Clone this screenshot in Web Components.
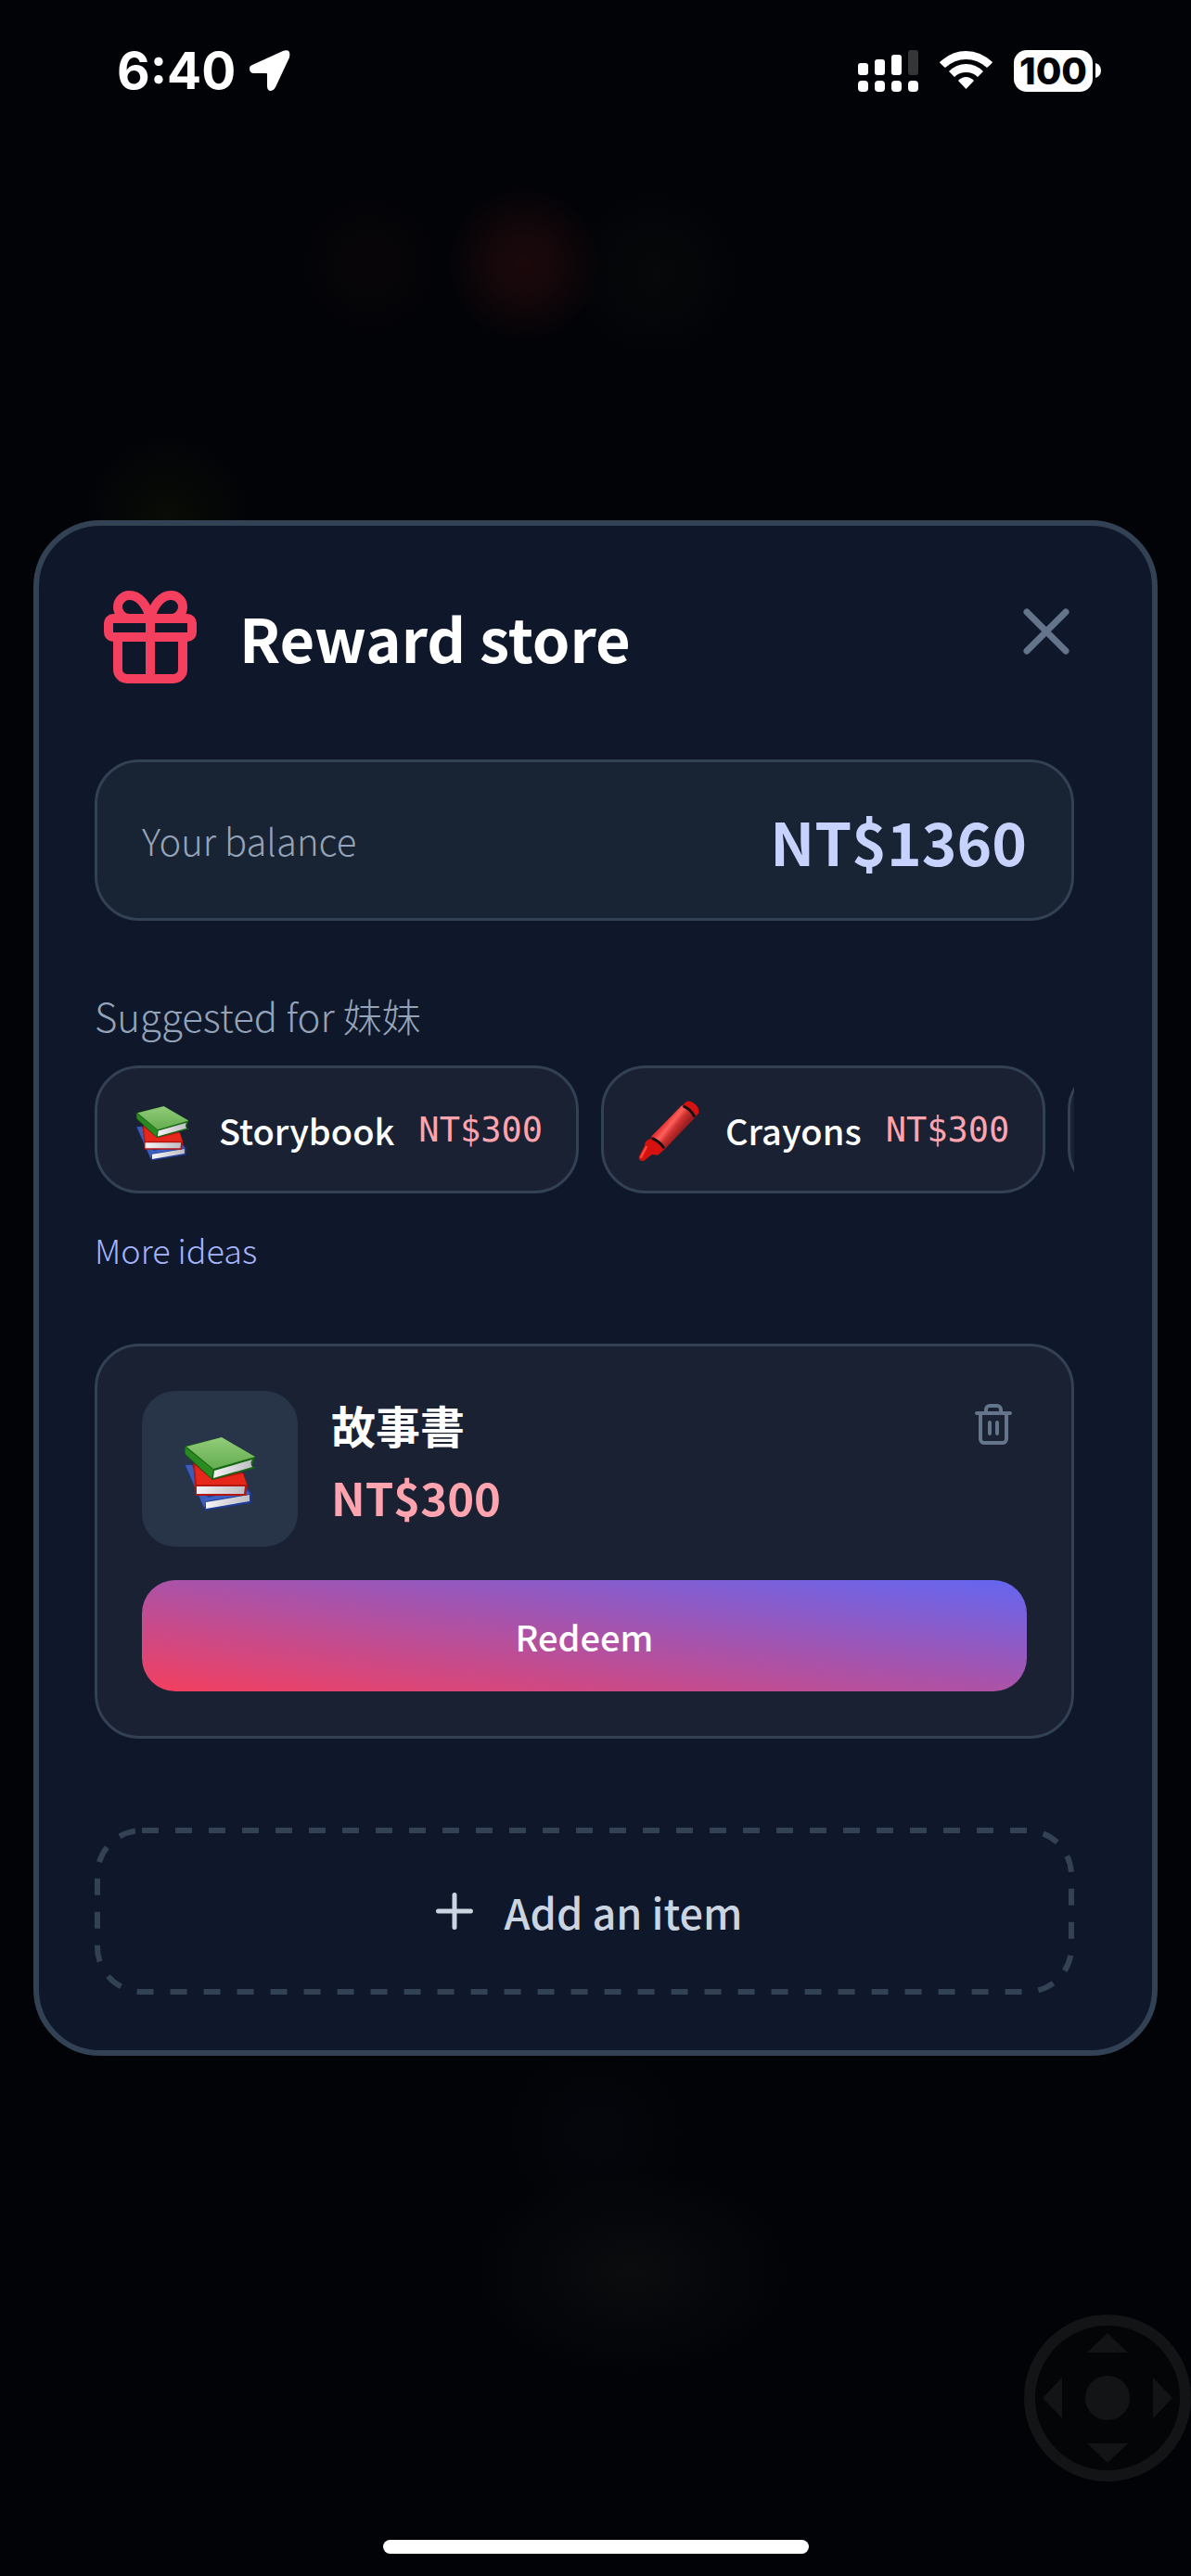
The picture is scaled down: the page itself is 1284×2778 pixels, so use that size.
<!DOCTYPE html>
<html lang="en">
<head>
<meta charset="utf-8">
<meta name="viewport" content="width=device-width, initial-scale=1">
<title>Reward store</title>
<style>
body {
    margin: 0;
    background-color: #020307;
    color: #fff;
    font-family: "Noto Sans CJK TC", "Noto Sans", sans-serif;
}
</style>
</head>
<body>
<app-screen>
    <status-bar slot="top" time="6:40" battery="100"></status-bar>
    <store-dialog heading="Reward store">
        <balance-box label="Your balance">NT$1360</balance-box>
        <idea-list label="Suggested for 妹妹">
            <idea-chip icon="books" name="Storybook" price="NT$300"></idea-chip>
            <idea-chip icon="crayon" name="Crayons" price="NT$300"></idea-chip>
            <idea-chip></idea-chip>
        </idea-list>
        <reward-item icon="books" name="故事書" price="NT$300">Redeem</reward-item>
        <add-button slot="footer">Add an item</add-button>
    </store-dialog>
    <joy-pad slot="float"></joy-pad>
</app-screen>

<script>
// small pictures shared by the chips and the items
const pictures = {
    books: `<svg viewBox="-8 -12 93 93" aria-hidden="true">
        <defs>
            <linearGradient id="green" x1="0" y1="0" x2="0" y2="1"><stop offset="0" stop-color="#92cc7a"/><stop offset="1" stop-color="#64ad4f"/></linearGradient>
            <linearGradient id="page" x1="0" y1="0" x2="1" y2="0"><stop offset="0" stop-color="#f4f4f6"/><stop offset="1" stop-color="#bdbdc3"/></linearGradient>
        </defs>
        <path d="M0 30L8 29L26 60L67 53L72 61L72 71L22 79Z" fill="#1e3a93"/>
        <path d="M1 30L8 30L25 65L21 76Z" fill="#3c5cb8"/>
        <path d="M20 66L66 56L71 61L23 69Z" fill="#3f5fc2"/>
        <path d="M23 70L70 62L70 69L23 77Z" fill="url(#page)"/>
        <path d="M9 28L32 36L63 38L68 52L66 63L12 63Z" fill="#b3160f"/>
        <path d="M11 30L30 46L63 39L67 51L13 51Z" fill="#e5281b"/>
        <path d="M13 53L65 53L64 61L13 61Z" fill="url(#page)"/>
        <path d="M0 11Q0 9 3 9L40 0L76 21L75 24L73 31L77 33L30 46L1 19Q-1 16 0 11Z" fill="#176613"/>
        <path d="M2 10L40 0L76 21L31 34Z" fill="url(#green)"/>
        <path d="M1 11L31 35L29 44L1 18Z" fill="#2a8a22"/>
        <path d="M32 36L73 24Q70 28 73 32L31 44Z" fill="url(#page)"/>
    </svg>`,
    crayon: `<svg viewBox="0 5 93 94" aria-hidden="true">
        <defs><linearGradient id="wax" gradientUnits="userSpaceOnUse" x1="43" y1="38" x2="63" y2="54"><stop offset="0" stop-color="#e83432"/><stop offset=".3" stop-color="#ff615d"/><stop offset=".6" stop-color="#cf3230"/><stop offset="1" stop-color="#9d1e20"/></linearGradient></defs>
        <path d="M2 91L10 76Q10 68 19 65L69 13Q73 8 80 11Q91 17 90 27L40 80L30 89L21 88L10 97Q6 99 3 96Q1 94 2 91Z" fill="#d5120f"/>
        <path d="M20 62L65 16L86 32L40 80Z" fill="url(#wax)"/>
        <path d="M67 17Q78 21 84 33M21 64Q33 69 39 79" fill="none" stroke="#111" stroke-width="4"/>
        <path d="M13 77L5 92" stroke="#ff4a42" stroke-width="3" stroke-linecap="round"/>
    </svg>`
};

class AppScreen extends HTMLElement {
    constructor() {
        super();
        this.attachShadow({mode: "open"});
        this.shadowRoot.innerHTML = `
<style>
:host {
    position: relative;
    display: grid;
    grid-template-rows: minmax(0, 1fr) auto minmax(0, 1fr);
    min-height: 100vh;
    overflow: hidden;
    background:
        radial-gradient(circle at 44% 285px, #1b080b 0, #14070a 36px, transparent 84px),
        radial-gradient(circle at 55% 295px, #070809 0, transparent 90px),
        radial-gradient(circle at 31% 285px, #080507 0, transparent 80px),
        radial-gradient(circle at 14% 560px, #0a0c06 0, transparent 90px),
        radial-gradient(ellipse 170px 110px at 53% 2450px, #0b0c0e 0, transparent 100%),
        radial-gradient(circle at 50% 2300px, #05060b 0, transparent 100px),
        #020307;
}
main { padding: 0 36px; }
footer {
    display: flex;
    justify-content: center;
    align-items: flex-end;
    padding-bottom: 24px;
}
.home {
    width: 459px;
    height: 15px;
    border-radius: 8px;
    background-color: #fff;
}
/* floats over the page */
.float {
    position: absolute;
    right: 0;
    bottom: 102px;
}
</style>
<slot name="top"></slot>
<main><slot></slot></main>
<footer><div class="home"></div></footer>
<div class="float"><slot name="float"></slot></div>
`;
    }
}

class StatusBar extends HTMLElement {
    connectedCallback() {
        this.attachShadow({mode: "open"});
        this.shadowRoot.innerHTML = `
<style>
:host {
    display: flex;
    justify-content: space-between;
    align-items: center;
    height: 152px;
    padding: 0 97px 0 126px;
    font-family: Inter, sans-serif;
    font-weight: 700;
}
div { display: flex; align-items: center; }
.left { gap: 15px; font-size: 55px; }
.right { gap: 23px; }
.battery { gap: 3px; }
.level {
    justify-content: center;
    width: 85px;
    height: 45px;
    border-radius: 14px;
    background-color: #fff;
    color: #020307;
    font-size: 40px;
    font-weight: 800;
}
svg { display: block; fill: #fff; }
</style>
<div class="left">
    <span>${this.getAttribute("time")}</span>
    <svg width="44" height="44" viewBox="0 0 44 44"><path d="M36 1Q45-2 43 8L28 40Q26 44 22 44Q19 43 19 39V26Q19 25 18 25H5Q0 25 0 20Q0 17 3 16Z"/></svg>
</div>
<div class="right">
    <svg width="65" height="45" viewBox="0 0 65 45">
        <rect y="14" width="11" height="13" rx="3"/><rect x="18" y="10" width="11" height="17" rx="3"/>
        <rect x="36" y="5" width="11" height="22" rx="3"/><rect x="54" width="11" height="27" rx="3" fill="#353638"/>
        <rect y="33" width="11" height="12" rx="4"/><rect x="18" y="33" width="11" height="12" rx="4"/>
        <rect x="36" y="33" width="11" height="12" rx="4"/><rect x="54" y="33" width="11" height="12" rx="4"/>
    </svg>
    <svg width="57" height="42" viewBox="0 0 57 42">
        <path d="M0 12Q13 0 28.500 0T57 12Q57 13 51 18Q41 9 28.500 9T6 18Q0 13 0 12Z"/>
        <path d="M10 22Q18 14 28.500 14T47 22L41 28Q36 23 28.500 23T16 28Z"/>
        <path d="M20 32Q24 28 28.500 28T37 32L28.500 41Z"/>
    </svg>
    <div class="battery">
        <div class="level">${this.getAttribute("battery")}</div>
        <svg width="6" height="16" viewBox="0 0 6 16"><path d="M0 0Q6 2 6 8T0 16Z"/></svg>
    </div>
</div>
`;
    }
}

class StoreDialog extends HTMLElement {
    connectedCallback() {
        this.attachShadow({mode: "open"});
        this.shadowRoot.innerHTML = `
<style>
:host {
    display: block;
    padding: 60px 84px 60px 60px;
    border: 6px solid #334155;
    border-radius: 72px;
    background-color: #0f172a;
}
header {
    display: flex;
    align-items: center;
    gap: 36px;
    margin-right: -12px;
}
h1 {
    flex: 1;
    margin: 0;
    font-size: 65px;
    line-height: 120px;
    font-weight: 700;
}
svg {
    display: block;
    fill: none;
    stroke: currentColor;
    stroke-width: 2;
    stroke-linecap: round;
    stroke-linejoin: round;
}
.gift { color: #f43f5e; }
button {
    align-self: flex-start;
    margin: 12px 0 0;
    padding: 0;
    border: none;
    background: none;
    color: #64748b;
}
.body {
    display: grid;
    grid-template-columns: minmax(0, 1fr);
    gap: 72px;
    margin: 72px 0 96px;
}
</style>
<header>
    <svg class="gift" width="120" height="120" viewBox="0 0 24 24"><rect x="3" y="8" width="18" height="4" rx="1"/><path d="M12 8v13"/><path d="M19 12v7a2 2 0 0 1-2 2H7a2 2 0 0 1-2-2v-7"/><path d="M7.500 8a2.500 2.500 0 0 1 0-5A4.800 8 0 0 1 12 8a4.800 8 0 0 1 4.500-5 2.500 2.500 0 0 1 0 5"/></svg>
    <h1>${this.getAttribute("heading")}</h1>
    <button type="button" aria-label="Close"><svg width="84" height="84" viewBox="0 0 24 24"><path d="M18 6L6 18M6 6l12 12"/></svg></button>
</header>
<div class="body"><slot></slot></div>
<slot name="footer"></slot>
`;
    }
}

class BalanceBox extends HTMLElement {
    connectedCallback() {
        this.attachShadow({mode: "open"});
        this.shadowRoot.innerHTML = `
<style>
:host {
    display: flex;
    justify-content: space-between;
    align-items: center;
    padding: 48px;
    border: 3px solid #334155;
    border-radius: 48px;
    background-color: #182334;
    line-height: 72px;
}
span {
    color: #94a3b8;
    font-size: 40px;
    font-weight: 300;
}
strong {
    color: #c7d2fe;
    font-size: 64px;
    font-weight: 700;
}
</style>
<span>${this.getAttribute("label")}</span>
<strong><slot></slot></strong>
`;
    }
}

class IdeaList extends HTMLElement {
    connectedCallback() {
        this.attachShadow({mode: "open"});
        this.shadowRoot.innerHTML = `
<style>
:host { display: block; }
p {
    margin: 0 0 24px;
    color: #94a3b8;
    font-size: 42px;
    line-height: 60px;
    font-weight: 300;
}
.row {
    display: flex;
    gap: 24px;
    overflow: hidden;
}
a {
    display: block;
    width: max-content;
    margin-top: 36px;
    padding-bottom: 6px;
    color: #a5b4fc;
    font-size: 36px;
    line-height: 48px;
    font-weight: 300;
    text-decoration: none;
}
</style>
<p>${this.getAttribute("label")}</p>
<div class="row"><slot></slot></div>
<a href="#ideas">More ideas</a>
`;
    }
}

class IdeaChip extends HTMLElement {
    connectedCallback() {
        this.attachShadow({mode: "open"});
        this.shadowRoot.innerHTML = `
<style>
:host { flex: none; }
button {
    display: flex;
    align-items: center;
    gap: 26px;
    min-width: 180px;
    height: 138px;
    padding: 0 36px;
    border: 3px solid #334155;
    border-radius: 48px;
    background-color: #1a2133;
    color: #fff;
    font-family: inherit;
    font-size: 38px;
    font-weight: 500;
}
svg { display: block; width: 69px; height: 69px; }
.price {
    color: #fda4af;
    font-family: "DejaVu Sans Mono", monospace;
    font-size: 37px;
    font-weight: 400;
}
</style>
<button type="button">
    ${pictures[this.getAttribute("icon")] || ""}
    <span>${this.getAttribute("name") || ""}</span>
    <span class="price">${this.getAttribute("price") || ""}</span>
</button>
`;
    }
}

class RewardItem extends HTMLElement {
    connectedCallback() {
        this.attachShadow({mode: "open"});
        this.shadowRoot.innerHTML = `
<style>
:host {
    display: block;
    padding: 48px;
    border: 3px solid #334155;
    border-radius: 48px;
    background-color: #1a2133;
}
.top {
    display: flex;
    align-items: flex-start;
    gap: 36px;
    margin-bottom: 36px;
}
.thumb {
    display: grid;
    place-items: center;
    width: 168px;
    height: 168px;
    border-radius: 36px;
    background-color: #283548;
}
.thumb svg { width: 93px; height: 93px; }
.info { flex: 1; }
h2 {
    margin: 0;
    font-size: 48px;
    line-height: 72px;
    font-weight: 700;
}
p {
    margin: 0;
    color: #fda4af;
    font-size: 49px;
    line-height: 84px;
    font-weight: 700;
}
button {
    display: block;
    border: none;
    font-family: inherit;
}
.delete {
    padding: 12px;
    background: none;
    color: #64748b;
}
.delete svg {
    display: block;
    fill: none;
    stroke: currentColor;
    stroke-width: 2;
    stroke-linecap: round;
    stroke-linejoin: round;
}
.redeem {
    width: 100%;
    height: 120px;
    border-radius: 36px;
    background: linear-gradient(to top right, #f43f5e, #6366f1);
    color: #fff;
    font-size: 38px;
    font-weight: 500;
}
</style>
<div class="top">
    <div class="thumb">${pictures[this.getAttribute("icon")]}</div>
    <div class="info">
        <h2>${this.getAttribute("name")}</h2>
        <p>${this.getAttribute("price")}</p>
    </div>
    <button class="delete" type="button" aria-label="Delete"><svg width="48" height="48" viewBox="0 0 24 24"><path d="M3 6h18"/><path d="M19 6v14c0 1-1 2-2 2H7c-1 0-2-1-2-2V6"/><path d="M8 6V4c0-1 1-2 2-2h4c1 0 2 1 2 2v2"/><path d="M10 11v6M14 11v6"/></svg></button>
</div>
<button class="redeem" type="button"><slot></slot></button>
`;
    }
}

class AddButton extends HTMLElement {
    constructor() {
        super();
        this.attachShadow({mode: "open"});
        this.shadowRoot.innerHTML = `
<style>
:host { display: block; }
button {
    position: relative;
    display: flex;
    justify-content: center;
    align-items: center;
    gap: 24px;
    width: 100%;
    height: 180px;
    padding: 0;
    border: none;
    border-radius: 48px;
    background: none;
    color: #cbd5e1;
    font-family: inherit;
    font-size: 45px;
    font-weight: 500;
}
svg { fill: none; stroke: currentColor; }
/* dashed frame, longer dashes than border-style gives */
.frame {
    position: absolute;
    inset: 0;
    width: 100%;
    height: 100%;
    overflow: visible;
}
.frame rect {
    x: 3px;
    y: 3px;
    width: calc(100% - 6px);
    height: calc(100% - 6px);
    rx: 48px;
    stroke: #334155;
    stroke-width: 6px;
    stroke-dasharray: 18 18;
}
</style>
<button type="button">
    <svg class="frame" aria-hidden="true"><rect/></svg>
    <svg width="60" height="60" viewBox="0 0 24 24" stroke-width="2" stroke-linecap="round"><path d="M5 12h14M12 5v14"/></svg>
    <span><slot></slot></span>
</button>
`;
    }
}

class JoyPad extends HTMLElement {
    constructor() {
        super();
        this.attachShadow({mode: "open"});
        this.shadowRoot.innerHTML = `
<style>
:host { display: block; }
svg { display: block; fill: #131416; }
</style>
<svg width="180" height="180" viewBox="0 0 180 180" aria-hidden="true">
    <circle cx="90" cy="90" r="84" fill="#040506" stroke="#131416" stroke-width="12"/>
    <circle cx="90" cy="90" r="24"/>
    <path d="M90 20L112 41H68ZM90 160L68 139H112ZM20 90L41 68V112ZM160 90L139 112V68Z"/>
</svg>
`;
    }
}

customElements.define("app-screen", AppScreen);
customElements.define("status-bar", StatusBar);
customElements.define("store-dialog", StoreDialog);
customElements.define("balance-box", BalanceBox);
customElements.define("idea-list", IdeaList);
customElements.define("idea-chip", IdeaChip);
customElements.define("reward-item", RewardItem);
customElements.define("add-button", AddButton);
customElements.define("joy-pad", JoyPad);
</script>
</body>
</html>
